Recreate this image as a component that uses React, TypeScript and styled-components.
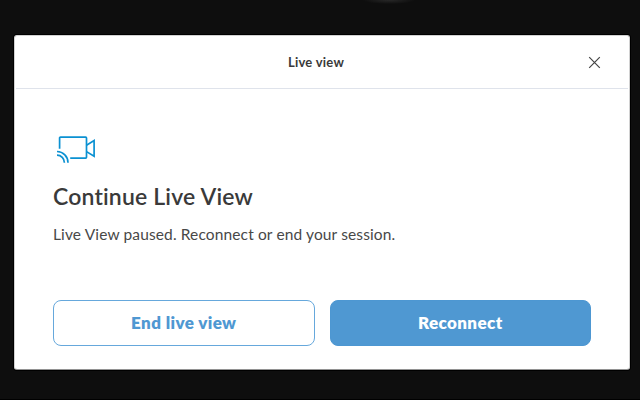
import React from "react";
import styled, { createGlobalStyle } from "styled-components";

const GlobalStyle = createGlobalStyle`
  * { box-sizing: border-box; }
  body { margin: 0; background: #0e0e0e; overflow: hidden; }
`;

const Backdrop = styled.main`
  width: 640px;
  height: 400px;
  padding: 35px 10px 30px 14px;
  background: radial-gradient(ellipse 26px 4px at 389px 0, #282828, transparent), #0e0e0e;
  border-bottom: 1px solid #000;
  font-family: Lato, "Open Sans", sans-serif;
  color: #3a3a3a;
`;

const Dialog = styled.section`
  display: flex;
  flex-direction: column;
  width: 616px;
  height: 335px;
  border: 1px solid #d2d2d2;
  border-bottom-color: #929292;
  border-radius: 3px;
  background: #fff;
  box-shadow: 0 0 0 1px #000;
`;

const Header = styled.header`
  display: grid;
  grid-template-columns: 1fr auto 1fr;
  align-items: center;
  height: 53px;
  margin: 0 1px;
  padding: 0 27px 0 0;
  border-bottom: 1px solid #dfe3eb;
`;

const Title = styled.h1`
  grid-column: 2;
  margin: 0 0 0 15px;
  font-size: 13px;
  font-weight: 700;
  line-height: 18px;
  letter-spacing: 0.25px;
  white-space: nowrap;
`;

const CloseButton = styled.button`
  justify-self: end;
  display: flex;
  padding: 0;
  border: 0;
  background: none;
  color: #444;
`;

const Content = styled.div`
  display: flex;
  flex-direction: column;
  align-items: flex-start;
  padding: 46px 38px 0;
`;

const CameraIcon = styled.svg`
  display: block;
  margin-left: 3px;
`;

const Heading = styled.h2`
  margin: 16px 0 0;
  font-size: 23px;
  font-weight: 600;
  line-height: 30px;
  letter-spacing: 0.17px;
  white-space: nowrap;
`;

const Message = styled.p`
  margin: 13px 0 0;
  font-size: 15.5px;
  line-height: 20px;
  letter-spacing: 0.13px;
  color: #484848;
  white-space: nowrap;
`;

const Actions = styled.footer`
  display: grid;
  grid-template-columns: 1fr 1fr;
  gap: 15px;
  margin: auto 38px 23px;
`;

const ActionButton = styled.button<{ $primary?: boolean }>`
  height: 46px;
  padding: 0;
  border: 1px solid ${({ $primary }) => ($primary ? "#4d97d2" : "#66a8dc")};
  border-radius: 8px;
  background: ${({ $primary }) => ($primary ? "#4f98d2" : "#fff")};
  color: ${({ $primary }) => ($primary ? "#fff" : "#4f98d2")};
  font: 800 17px/22px Lato, "Open Sans", sans-serif;
  letter-spacing: 0.4px;
`;

export default function App() {
  return (
    <>
      <GlobalStyle />
      <Backdrop>
        <Dialog role="dialog" aria-labelledby="dialog-title">
          <Header>
            <Title id="dialog-title">Live view</Title>
            <CloseButton aria-label="Close">
              <svg width="13" height="13" viewBox="0 0 13 13" fill="none" stroke="currentColor" strokeWidth="1.2">
                <path d="M1.2 1.2l10.6 10.6M11.8 1.2L1.2 11.8" />
              </svg>
            </CloseButton>
          </Header>
          <Content>
            <CameraIcon width="40" height="30" viewBox="0 0 40 30" fill="none" stroke="#0b91d2" strokeWidth="1.7">
              <path d="M3.6 13.8V3q0-.9.9-.9h25.1q.9 0 .9.9v19.2q0 .9-.9.9H14.2" />
              <path d="M30.5 10.2l7.6-4.7v15.8l-7.6-4.7" />
              <path d="M1 16.5a11 11 0 0 1 11 11.2M1 20.2a7.4 7.4 0 0 1 7.4 7.5" />
            </CameraIcon>
            <Heading>Continue Live View</Heading>
            <Message>Live View paused. Reconnect or end your session.</Message>
          </Content>
          <Actions>
            <ActionButton>End live view</ActionButton>
            <ActionButton $primary>Reconnect</ActionButton>
          </Actions>
        </Dialog>
      </Backdrop>
    </>
  );
}
